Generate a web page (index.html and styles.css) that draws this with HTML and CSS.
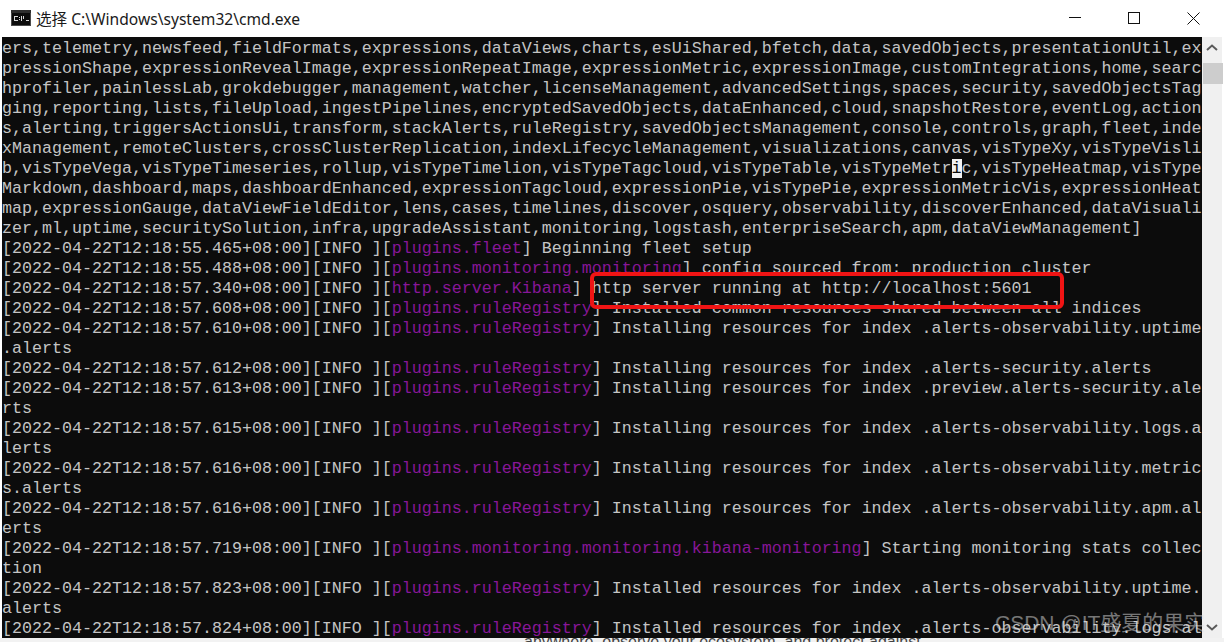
FILE: index.html
```html
<!DOCTYPE html>
<html lang="zh">
<head>
<meta charset="utf-8">
<title>cmd.exe</title>
<link rel="stylesheet" href="styles.css">
</head>
<body>
<div class="window">
  <header class="titlebar">
    <svg class="app-icon" width="20" height="16" viewBox="0 0 20 16"><rect width="20" height="16" fill="#4a4a4a"/><rect x="0" y="0" width="20" height="3" fill="#2e2e2e"/><rect x="1" y="3" width="18" height="12" fill="#0c0c0c"/><path d="M3 6h4v1H4v3h3v1H3zM8 7h1v1H8zM8 9h1v1H8zM10 6h1v5h-1zM12 6h1v3h-1zM15 10h3v1h-3z" fill="#d8d8d8"/></svg>
    <span class="title">选择 C:\Windows\system32\cmd.exe</span>
    <div class="controls">
      <svg class="ctl" width="13" height="13" viewBox="0 0 13 13"><path d="M0 5.5h12" stroke="#111" fill="none"/></svg>
      <svg class="ctl" width="13" height="13" viewBox="0 0 13 13"><rect x="0.5" y="0.5" width="11" height="11" stroke="#111" fill="none"/></svg>
      <svg class="ctl" width="13" height="13" viewBox="0 0 13 13"><path d="M0.5 0.5l12 12M12.5 0.5l-12 12" stroke="#111" fill="none"/></svg>
    </div>
  </header>
  <div class="body">
    <main class="console">
<div class="ln">ers,telemetry,newsfeed,fieldFormats,expressions,dataViews,charts,esUiShared,bfetch,data,savedObjects,presentationUtil,ex</div>
<div class="ln">pressionShape,expressionRevealImage,expressionRepeatImage,expressionMetric,expressionImage,customIntegrations,home,searc</div>
<div class="ln">hprofiler,painlessLab,grokdebugger,management,watcher,licenseManagement,advancedSettings,spaces,security,savedObjectsTag</div>
<div class="ln">ging,reporting,lists,fileUpload,ingestPipelines,encryptedSavedObjects,dataEnhanced,cloud,snapshotRestore,eventLog,action</div>
<div class="ln">s,alerting,triggersActionsUi,transform,stackAlerts,ruleRegistry,savedObjectsManagement,console,controls,graph,fleet,inde</div>
<div class="ln">xManagement,remoteClusters,crossClusterReplication,indexLifecycleManagement,visualizations,canvas,visTypeXy,visTypeVisli</div>
<div class="ln">b,visTypeVega,visTypeTimeseries,rollup,visTypeTimelion,visTypeTagcloud,visTypeTable,visTypeMetr<span class="sel">i</span>c,visTypeHeatmap,visType</div>
<div class="ln">Markdown,dashboard,maps,dashboardEnhanced,expressionTagcloud,expressionPie,visTypePie,expressionMetricVis,expressionHeat</div>
<div class="ln">map,expressionGauge,dataViewFieldEditor,lens,cases,timelines,discover,osquery,observability,discoverEnhanced,dataVisuali</div>
<div class="ln">zer,ml,uptime,securitySolution,infra,upgradeAssistant,monitoring,logstash,enterpriseSearch,apm,dataViewManagement]</div>
<div class="ln">[2022-04-22T12:18:55.465+08:00][INFO ][<span class="m">plugins.fleet</span>] Beginning fleet setup</div>
<div class="ln">[2022-04-22T12:18:55.488+08:00][INFO ][<span class="m">plugins.monitoring.monitoring</span>] config sourced from: production cluster</div>
<div class="ln">[2022-04-22T12:18:57.340+08:00][INFO ][<span class="m">http.server.Kibana</span>] http server running at http://localhost:5601</div>
<div class="ln">[2022-04-22T12:18:57.608+08:00][INFO ][<span class="m">plugins.ruleRegistry</span>] Installed common resources shared between all indices</div>
<div class="ln">[2022-04-22T12:18:57.610+08:00][INFO ][<span class="m">plugins.ruleRegistry</span>] Installing resources for index .alerts-observability.uptime</div>
<div class="ln">.alerts</div>
<div class="ln">[2022-04-22T12:18:57.612+08:00][INFO ][<span class="m">plugins.ruleRegistry</span>] Installing resources for index .alerts-security.alerts</div>
<div class="ln">[2022-04-22T12:18:57.613+08:00][INFO ][<span class="m">plugins.ruleRegistry</span>] Installing resources for index .preview.alerts-security.ale</div>
<div class="ln">rts</div>
<div class="ln">[2022-04-22T12:18:57.615+08:00][INFO ][<span class="m">plugins.ruleRegistry</span>] Installing resources for index .alerts-observability.logs.a</div>
<div class="ln">lerts</div>
<div class="ln">[2022-04-22T12:18:57.616+08:00][INFO ][<span class="m">plugins.ruleRegistry</span>] Installing resources for index .alerts-observability.metric</div>
<div class="ln">s.alerts</div>
<div class="ln">[2022-04-22T12:18:57.616+08:00][INFO ][<span class="m">plugins.ruleRegistry</span>] Installing resources for index .alerts-observability.apm.al</div>
<div class="ln">erts</div>
<div class="ln">[2022-04-22T12:18:57.719+08:00][INFO ][<span class="m">plugins.monitoring.monitoring.kibana-monitoring</span>] Starting monitoring stats collec</div>
<div class="ln">tion</div>
<div class="ln">[2022-04-22T12:18:57.823+08:00][INFO ][<span class="m">plugins.ruleRegistry</span>] Installed resources for index .alerts-observability.uptime.</div>
<div class="ln">alerts</div>
<div class="ln">[2022-04-22T12:18:57.824+08:00][INFO ][<span class="m">plugins.ruleRegistry</span>] Installed resources for index .alerts-observability.logs.al</div>
    </main>
    <aside class="scrollbar">
      <svg class="arrow" width="12" height="8" viewBox="0 0 12 8"><path d="M1 6l5-4.5L11 6" stroke="#5a5a5a" stroke-width="2" fill="none"/></svg>
      <div class="thumb"></div>
      <svg class="arrow arrow-down" width="12" height="8" viewBox="0 0 12 8"><path d="M1 2l5 4.5L11 2" stroke="#5a5a5a" stroke-width="2" fill="none"/></svg>
    </aside>
  </div>
</div>
<div class="below">anywhere, observe your ecosystem, and protect against</div>
<div class="highlight"></div>
<div class="watermark">CSDN @IT盛夏的果实</div>
</body>
</html>
```
FILE: styles.css
```css
html, body { margin: 0; padding: 0; }
body { width: 1224px; height: 642px; overflow: hidden; position: relative; background: #f2f2f2; font-family: "Liberation Sans", "Noto Sans CJK SC", sans-serif; }
.window { height: 638px; background: #fff; display: flex; flex-direction: column; overflow: hidden; padding-left: 2px; }
.titlebar { height: 37px; flex: none; display: flex; align-items: center; padding-left: 9px; padding-bottom: 1px; box-sizing: border-box; }
.app-icon { flex: none; margin-right: 5px; }
.title { font-size: 15.6px; color: #1a1a1a; font-family: "Noto Sans", "Noto Sans CJK SC", sans-serif; }
.controls { margin-left: auto; display: flex; gap: 46px; padding-right: 24px; }
.body { flex: 1; display: flex; min-height: 0; }
.console { width: 1200px; flex: none; background: #0c0c0c; color: #c4c4c4; font-family: "Liberation Mono", "DejaVu Sans Mono", monospace; font-size: 16.67px; line-height: 20px; overflow: hidden; padding-top: 2px; }
.ln { height: 20px; white-space: pre; }
.m { color: #881798; }
.sel { background: #f2f2f2; color: #0c0c0c; }
.scrollbar { width: 20px; flex: none; background: #f0f0f0; display: flex; flex-direction: column; align-items: center; margin-right: 2px; }
.arrow { margin-top: 7px; flex: none; }
.thumb { width: 100%; height: 21px; background: #cdcdcd; margin-top: 11px; margin-left: 1px; }
.arrow-down { margin-top: auto; margin-bottom: 7px; }
.below { position: absolute; left: 524px; top: 633px; font-size: 16px; color: #444; white-space: nowrap; z-index: -1; }
.highlight { position: absolute; left: 590px; top: 272px; width: 466px; height: 29px; border: 4px solid #f01414; border-radius: 6px; }
.watermark { position: absolute; left: 995px; top: 606px; font-size: 21px; color: rgba(225,225,225,0.5); white-space: nowrap; }
```
